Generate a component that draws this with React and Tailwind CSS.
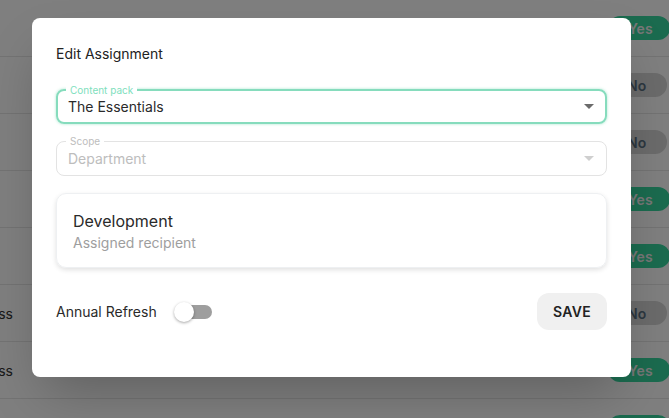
import React, { useState } from 'react';

const rows = [
  { label: '', value: true },
  { label: '', value: false },
  { label: '', value: false },
  { label: '', value: true },
  { label: '', value: true },
  { label: 'Business', value: false },
  { label: 'Business', value: true },
  { label: '', value: true },
];

const Caret = ({ className }) => (
  <svg width="10" height="5" viewBox="0 0 10 5" className={className}>
    <path d="M0 0 L10 0 L5 5 Z" fill="currentColor" />
  </svg>
);

const SelectField = ({ label, value, active, disabled }) => (
  <div
    className={`relative h-[35px] rounded-lg flex items-center justify-between ${
      active
        ? 'border-2 border-[#86dcbd] shadow-[0_0_3px_rgba(110,215,175,0.6)] pl-[10px] pr-[11px]'
        : 'border border-[#e3e3e3] pl-[11px] pr-[12px]'
    }`}
  >
    <span
      className={`absolute -top-[8px] bg-white px-[4px] text-[10px] leading-[14px] ${
        active ? 'left-[8px] text-[#7ee0bd]' : 'left-[9px] text-[#bdbdbd]'
      }`}
    >
      {label}
    </span>
    <span className={`text-[14px] ${disabled ? 'text-[#bdbdbd]' : 'text-[#2a2a2a]'}`}>{value}</span>
    <Caret className={disabled ? 'text-[#cfcfcf]' : 'text-[#6b6b6b]'} />
  </div>
);

const App = () => {
  const [refresh, setRefresh] = useState(false);

  return (
    <div className="relative w-[669px] h-[418px] overflow-hidden bg-white" style={{ fontFamily: 'Inter, "Noto Sans", sans-serif' }}>
      {/* table behind */}
      <div className="flex flex-col">
        {rows.map((r, i) => (
          <div key={i} className="h-[57px] shrink-0 border-b border-[#e6e6e6] flex items-center justify-between">
            <div className="w-[13px] overflow-hidden flex justify-end">
              <span className="text-[14px] text-[#333] whitespace-nowrap">{r.label}</span>
            </div>
            {r.value ? (
              <span className="w-[62px] h-[24px] rounded-full bg-[#36d69f] text-[#eeeeee] text-[14px] font-semibold flex items-center pl-[20px] -mr-[1px]">
                Yes
              </span>
            ) : (
              <span className="w-[60px] h-[24px] rounded-full bg-[#d6d6d6] text-[#5a6e80] text-[14px] font-semibold flex items-center pl-[20px] mr-[2px]">
                No
              </span>
            )}
          </div>
        ))}
      </div>

      {/* overlay */}
      <div className="absolute inset-0 bg-black/50 pl-[32px] pt-[18px]">
        <div className="w-[599px] h-[359px] bg-white rounded-lg shadow-2xl px-6 pt-[26px] pb-[48px] flex flex-col">
          <h2 className="text-[14px] leading-[20px] font-normal text-[#222]">Edit Assignment</h2>

          <div className="mt-[25px] flex flex-col gap-[17px]">
            <SelectField label="Content pack" value="The Essentials" active />
            <SelectField label="Scope" value="Department" disabled />

            <div className="h-[75px] rounded-[10px] border border-[#eef0f2] shadow-[0_2px_5px_rgba(0,0,0,0.12)] px-4 pt-[15px]">
              <p className="text-[16px] leading-[24px] text-[#2a2a2a]">Development</p>
              <p className="text-[14px] leading-[20px] text-[#9e9e9e]">Assigned recipient</p>
            </div>
          </div>

          <div className="mt-[25px] flex items-center justify-between">
            <div className="flex items-center gap-[17px]">
              <span className="text-[14px] text-[#2a2a2a]">Annual Refresh</span>
              <button
                onClick={() => setRefresh(!refresh)}
                className="relative w-[38px] h-[20px] flex items-center"
              >
                <span className={`absolute left-[10px] w-[28px] h-[14px] rounded-full ${refresh ? 'bg-[#86dcbd]' : 'bg-[#9e9e9e]'}`} />
                <span
                  className={`absolute top-0 w-[20px] h-[20px] rounded-full bg-white shadow-[0_1px_3px_rgba(0,0,0,0.35)] ${
                    refresh ? 'left-[18px]' : 'left-0'
                  }`}
                />
              </button>
            </div>
            <button className="w-[70px] h-[37px] rounded-xl bg-[#f0f0f0] text-[14px] font-semibold tracking-wide text-[#222]">
              SAVE
            </button>
          </div>
        </div>
      </div>
    </div>
  );
};

export default App;
